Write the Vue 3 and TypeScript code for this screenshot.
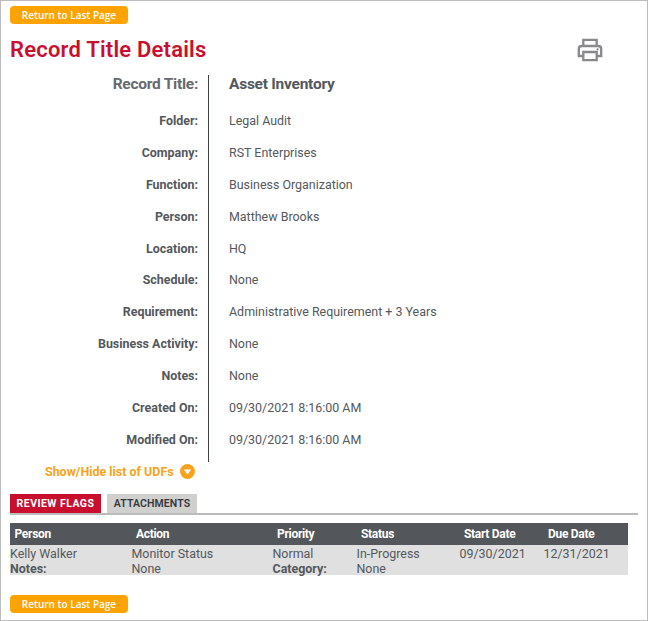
<script setup lang="ts">
import { ref } from 'vue'

interface Field {
  label: string
  value: string
}

const fields: Field[] = [
  { label: 'Folder:', value: 'Legal Audit' },
  { label: 'Company:', value: 'RST Enterprises' },
  { label: 'Function:', value: 'Business Organization' },
  { label: 'Person:', value: 'Matthew Brooks' },
  { label: 'Location:', value: 'HQ' },
  { label: 'Schedule:', value: 'None' },
  { label: 'Requirement:', value: 'Administrative Requirement + 3 Years' },
  { label: 'Business Activity:', value: 'None' },
  { label: 'Notes:', value: 'None' },
  { label: 'Created On:', value: '09/30/2021 8:16:00 AM' },
  { label: 'Modified On:', value: '09/30/2021 8:16:00 AM' },
]

const tabs: string[] = ['REVIEW FLAGS', 'ATTACHMENTS']
const activeTab = ref<string>('REVIEW FLAGS')
const columns: string[] = ['Person', 'Action', 'Priority', 'Status', 'Start Date', 'Due Date']
const flag: string[] = ['Kelly Walker', 'Monitor Status', 'Normal', 'In-Progress', '09/30/2021', '12/31/2021']
</script>

<template>
  <div class="page">
    <button class="return" type="button">Return to Last Page</button>
    <header class="heading">
      <h1>Record Title Details</h1>
      <svg class="printer" viewBox="0 0 26 24" fill="none" stroke="#87898b" stroke-width="2.3">
        <path d="M6.3 7.5V1.8h13.4v5.7" />
        <path d="M6 18H1.8V11q0-3 3-3h16.4q3 0 3 3v7H20" />
        <path d="M6.3 14h13.4v8.2H6.3z" />
        <circle cx="20.6" cy="11.4" r="1.1" fill="#87898b" stroke="none" />
      </svg>
    </header>

    <dl class="details">
      <div class="row lead">
        <dt>Record Title:</dt>
        <dd>Asset Inventory</dd>
      </div>
      <div v-for="f in fields" :key="f.label" class="row">
        <dt>{{ f.label }}</dt>
        <dd>{{ f.value }}</dd>
      </div>
    </dl>

    <a class="toggle">
      <span>Show/Hide list of UDFs</span>
      <svg viewBox="0 0 15 15">
        <circle cx="7.5" cy="7.5" r="7.5" fill="#faa21b" />
        <path d="M3.8 5.4h7.4L7.5 10.4z" fill="#fff" />
      </svg>
    </a>

    <nav class="tabs">
      <button
        v-for="t in tabs"
        :key="t"
        type="button"
        class="tab"
        :class="{ active: t === activeTab }"
        @click="activeTab = t"
      ><span>{{ t }}</span></button>
    </nav>

    <section class="flags">
      <div class="line head">
        <span v-for="c in columns" :key="c">{{ c }}</span>
      </div>
      <div class="body">
        <div class="line">
          <span v-for="c in flag" :key="c">{{ c }}</span>
        </div>
        <div class="line">
          <b>Notes:</b><span>None</span><b>Category:</b><span>None</span>
        </div>
      </div>
    </section>

    <button class="return" type="button">Return to Last Page</button>
  </div>
</template>

<style>
body {
  background: #fff;
}
</style>

<style scoped>
.page {
  box-sizing: border-box;
  width: 648px;
  height: 621px;
  padding: 5px 9px 0;
  border: 1px solid #bdbdbd;
  font-family: Roboto, sans-serif;
  font-size: 12.45px;
  color: #54585c;
  white-space: nowrap;
}
button {
  border: 0;
  margin: 0;
  padding: 0;
}
.return {
  display: block;
  width: 118px;
  height: 18px;
  border-radius: 4px;
  background: #ffa300;
  color: #fff;
  font: 600 10px/18px "Open Sans", sans-serif;
  text-align: center;
}
.heading {
  display: flex;
  justify-content: space-between;
  height: 51px;
}
h1 {
  margin: 12px 0 0;
  font-size: 22px;
  line-height: 28px;
  font-weight: 600;
  letter-spacing: 0.2px;
  color: #c8102e;
}
.printer {
  width: 26px;
  height: 24px;
  margin: 14px 35px 0 0;
}
.details {
  position: relative;
  margin: 0;
  height: 387px;
}
.details::before {
  content: "";
  position: absolute;
  left: 198px;
  top: 0;
  width: 1px;
  height: 387px;
  background: #3c4045;
}
.row {
  display: grid;
  grid-template-columns: 188px 1fr;
  column-gap: 31px;
  height: 31.87px;
  line-height: 16px;
}
.row dt {
  text-align: right;
  font-weight: 700;
}
.row dd {
  margin: 0;
}
.row.lead {
  height: 38.2px;
  line-height: 19px;
  font-size: 15.5px;
  letter-spacing: -0.25px;
}
.row.lead dt,
.row.lead dd {
  font-weight: 700;
}
.row.lead dt {
  color: #666a6e;
}
.toggle {
  display: flex;
  align-items: center;
  gap: 6.5px;
  height: 18px;
  margin-left: 35px;
  color: #faa21b;
  font-weight: 700;
}
.toggle svg {
  width: 15px;
  height: 15px;
}
.tabs {
  display: flex;
  gap: 6px;
  width: 628px;
  height: 19px;
  margin-top: 14px;
  border-bottom: 2px solid #bdbcbc;
}
.tab {
  width: 90px;
  height: 19px;
  background: #d0d0ce;
  color: #35383c;
  font: 600 10.5px/19px Roboto, sans-serif;
  letter-spacing: 0.1px;
}
.tab.active {
  width: 91px;
  background: #c8102e;
  color: #fff;
  font-weight: 700;
  letter-spacing: 0.45px;
}
.flags {
  width: 618px;
  margin: 8px 0 20px;
}
.line {
  display: grid;
  grid-template-columns: 121.5px 141px 84px 103px 84px 1fr;
  line-height: 15px;
}
.head {
  height: 22px;
  line-height: 22px;
  padding-left: 4.5px;
  background: #53565a;
  color: #fff;
  font-size: 12px;
  letter-spacing: -0.3px;
  font-weight: 700;
}
.body {
  box-sizing: border-box;
  height: 30px;
  padding-top: 1px;
  background: #e0e0e0;
}
</style>
